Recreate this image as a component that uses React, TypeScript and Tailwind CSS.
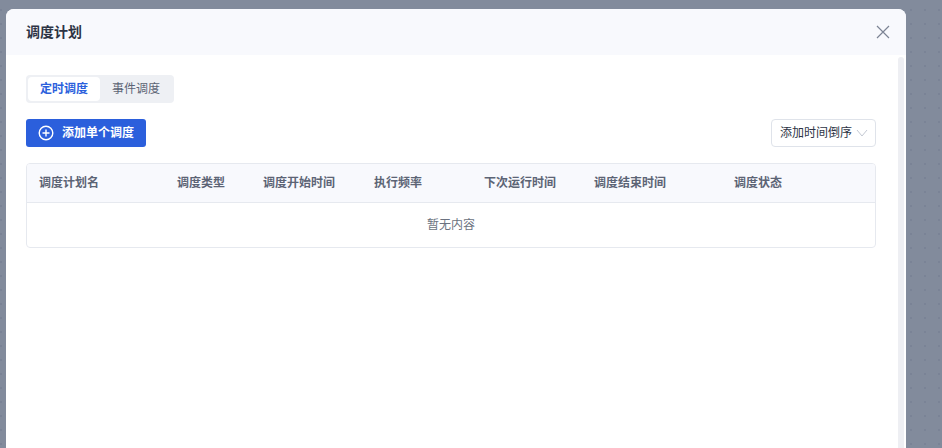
import React from 'react';

const columns = [
  { label: '调度计划名', width: 'w-[138px]' },
  { label: '调度类型', width: 'w-[86px]' },
  { label: '调度开始时间', width: 'w-[111px]' },
  { label: '执行频率', width: 'w-[110px]' },
  { label: '下次运行时间', width: 'w-[110px]' },
  { label: '调度结束时间', width: 'w-[140px]' },
  { label: '调度状态', width: 'w-[100px]' },
];

const App = () => {
  return (
    <div className="h-[448px] w-[942px] overflow-hidden bg-[#828b9c] bg-[radial-gradient(#7a8396_1.5px,transparent_1.5px)] bg-size-[14px_14px] bg-position-[8px_3px] pl-[6px] pt-[9px] font-['Liberation_Sans','Noto_Sans_CJK_SC',sans-serif]">
      <div className="h-[460px] w-[900px] overflow-hidden rounded-t-lg bg-white">
        <div className="flex h-[46px] items-center justify-between bg-[#f8f9fd] pl-5 pr-4">
          <h1 className="text-sm font-bold text-[#2d3445]">调度计划</h1>
          <svg width="14" height="14" viewBox="0 0 14 14" fill="none" stroke="#7c8494" strokeWidth="1.2">
            <path d="M1 1l12 12M13 1L1 13" />
          </svg>
        </div>
        <div className="flex">
          <div className="w-[892px] pl-5 pr-[22px] pt-5">
            <div className="flex h-7 w-[148px] items-center rounded bg-[#eef0f4] p-[2px] text-xs">
              <div className="flex h-6 w-[72px] items-center justify-center rounded bg-white font-bold text-[#2b5fdc]">定时调度</div>
              <div className="flex h-6 w-[72px] items-center justify-center text-[#5c6475]">事件调度</div>
            </div>
            <div className="mt-4 flex items-center justify-between">
              <button className="flex h-7 w-[120px] items-center justify-center gap-2 rounded-[3px] bg-[#2b5fdc] text-xs font-bold text-white">
                <svg width="16" height="16" viewBox="0 0 16 16" fill="none" stroke="white" strokeWidth="1.4">
                  <circle cx="8" cy="8" r="6.8" />
                  <path d="M8 4.5v7M4.5 8h7" />
                </svg>
                添加单个调度
              </button>
              <div className="flex h-7 w-[105px] items-center justify-between rounded border border-[#dfe3ea] pl-2 pr-[7px] text-xs text-[#2d3445]">
                添加时间倒序
                <svg width="12" height="12" viewBox="0 0 12 12" fill="none" stroke="#c4c9d3" strokeWidth="1">
                  <path d="M1 3l5 6 5-6" />
                </svg>
              </div>
            </div>
            <div className="mt-4 overflow-hidden rounded border border-[#e6e9ef]">
              <div className="flex h-[39px] items-center border-b border-[#e6e9ef] bg-[#f8f9fd] pl-3 text-xs font-bold text-[#5c6475]">
                {columns.map((col) => (
                  <div key={col.label} className={col.width}>{col.label}</div>
                ))}
              </div>
              <div className="flex h-[44px] items-center justify-center text-xs text-[#6b7280]">暂无内容</div>
            </div>
          </div>
          <div className="mt-[2px] h-[400px] w-[6px] rounded-t bg-[#eeeff3]"></div>
        </div>
      </div>
    </div>
  );
};

export default App;
